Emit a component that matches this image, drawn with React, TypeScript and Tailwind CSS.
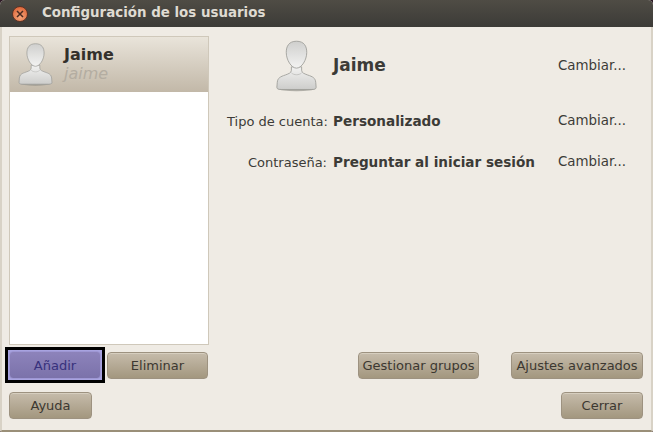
const font = "font-['DejaVu_Sans',sans-serif]";

function UserIcon({ className }: { className: string }) {
  return (
    <svg viewBox="0 0 48 60" className={className}>
      <defs>
        <linearGradient id="body" x1="0" y1="0" x2="0" y2="1">
          <stop offset="0" stopColor="#f2f2f1" />
          <stop offset="1" stopColor="#cdcdcb" />
        </linearGradient>
        <linearGradient id="head" x1="0" y1="0" x2="0" y2="1">
          <stop offset="0" stopColor="#cfcfcd" />
          <stop offset="1" stopColor="#f3f3f2" />
        </linearGradient>
      </defs>
      <ellipse cx="24" cy="57" rx="21" ry="2.5" fill="#85857f" opacity="0.6" />
      <path
        d="M18 31 L18 35 C18 38 15 39 11 40.5 C5 42.5 2 44 1.5 49 L1 55 C1 57 3 57.5 6 57.5 L42 57.5 C45 57.5 47 57 47 55 L46.5 49 C46 44 43 42.5 37 40.5 C33 39 30 38 30 35 L30 31 Z"
        fill="url(#body)"
        stroke="#9c9c98"
        strokeWidth="1"
      />
      <path d="M18 38 C21 41 27 41 30 38" fill="none" stroke="#b5b5b2" strokeWidth="0.8" />
      <path
        d="M24 1 C15 1 12 7 12 14 C12 23 18 32.5 24 32.5 C30 32.5 36 23 36 14 C36 7 33 1 24 1 Z"
        fill="url(#head)"
        stroke="#9c9c98"
        strokeWidth="1"
      />
    </svg>
  );
}

function GtkButton({ label, className }: { label: string; className: string }) {
  return (
    <button
      className={`h-[27px] rounded-[4px] border border-[#9d9280] bg-gradient-to-b from-[#c6bcab] to-[#a3977f] text-[13px] leading-none text-[#3c3831] shadow-[inset_0_1px_0_#d6cebf] ${className}`}
    >
      {label}
    </button>
  );
}

function InfoRow({ label, value, className }: { label: string; value: string; className: string }) {
  return (
    <div className={`flex h-[17px] items-center text-[#3c3b37] ${className}`}>
      <span className="w-[100px] shrink-0 whitespace-nowrap text-right text-[13px]">{label}</span>
      <span className="ml-[6px] flex-1 whitespace-nowrap text-[13.6px] font-bold">{value}</span>
      <span className="w-[85px] shrink-0 whitespace-nowrap text-[13.4px]">Cambiar...</span>
    </div>
  );
}

export default function App() {
  return (
    <div className={`${font} h-[432px] w-[653px] overflow-hidden bg-[#2e1a26]`}>
      <div className="flex h-full flex-col overflow-hidden rounded-b-[2px] rounded-t-[5px] bg-[#efebe4]">
        <div className="flex h-[27px] shrink-0 items-center bg-gradient-to-b from-[#4f4c45] to-[#3c3b37] pl-[12px]">
          <span className="flex h-[16px] w-[16px] items-center justify-center rounded-full border border-[#5d3325] bg-[radial-gradient(circle_at_50%_70%,#f7a77c,#d9582a)]">
            <svg viewBox="0 0 8 8" className="h-[8px] w-[8px]">
              <path d="M1 1 L7 7 M7 1 L1 7" stroke="#4a2a20" strokeWidth="1.5" />
            </svg>
          </span>
          <span className="ml-[14px] whitespace-nowrap text-[13.4px] font-bold text-[#dfdbd2]">
            Configuración de los usuarios
          </span>
        </div>

        <div className="flex min-h-0 flex-1 flex-col border-x-2 border-b-2 border-x-[#d8d2c6] border-b-[#9a8f78] px-[7px] pb-[11px] pt-[9px]">
          <div className="flex min-h-0 flex-1">
            <div className="flex w-[200px] shrink-0 flex-col">
              <div className="h-[309px] shrink-0 border border-[#cfc8ba] bg-white">
                <div className="flex h-[55px] items-center bg-gradient-to-b from-[#e9e4da] to-[#c2b8a8] pl-[8px]">
                  <UserIcon className="h-[43px] w-[35px] shrink-0" />
                  <div className="ml-[11px] flex flex-col">
                    <span className="text-[16px] font-bold leading-[18px] text-[#33302b]">Jaime</span>
                    <span className="text-[16px] italic leading-[19px] text-[#b4ada1]">jaime</span>
                  </div>
                </div>
              </div>
              <div className="mt-[2px] flex items-center">
                <div className="-ml-[4px] flex h-[36px] w-[100px] shrink-0 items-center justify-center border-[3px] border-black bg-[#a8a3e0]">
                  <button className="h-[28px] w-[92px] rounded-[4px] border border-[#9e97d4] bg-gradient-to-b from-[#8d83bb] to-[#7b72aa] text-[13px] leading-none text-[#37317c]">
                    Añadir
                  </button>
                </div>
                <GtkButton label="Eliminar" className="ml-[2px] w-[101px]" />
              </div>
            </div>

            <div className="ml-[18px] mr-[1px] flex min-w-0 flex-1 flex-col">
              <div className="mt-[4px] flex h-[52px] items-center">
                <UserIcon className="ml-[49px] h-[52px] w-[41px] shrink-0" />
                <span className="ml-[16px] flex-1 text-[17px] font-bold text-[#3c3b37]">Jaime</span>
                <span className="w-[85px] shrink-0 whitespace-nowrap text-[13.4px] text-[#3c3b37]">Cambiar...</span>
              </div>
              <InfoRow label="Tipo de cuenta:" value="Personalizado" className="mt-[21px]" />
              <InfoRow label="Contraseña:" value="Preguntar al iniciar sesión" className="mt-[24px]" />
              <div className="mb-[4px] mt-auto flex items-center justify-end">
                <GtkButton label="Gestionar grupos" className="w-[121px]" />
                <GtkButton label="Ajustes avanzados" className="ml-[32px] w-[132px]" />
              </div>
            </div>
          </div>
          <div className="mt-[9px] flex items-center justify-between">
            <GtkButton label="Ayuda" className="w-[83px]" />
            <GtkButton label="Cerrar" className="mr-[1px] w-[82px]" />
          </div>
        </div>
      </div>
    </div>
  );
}
